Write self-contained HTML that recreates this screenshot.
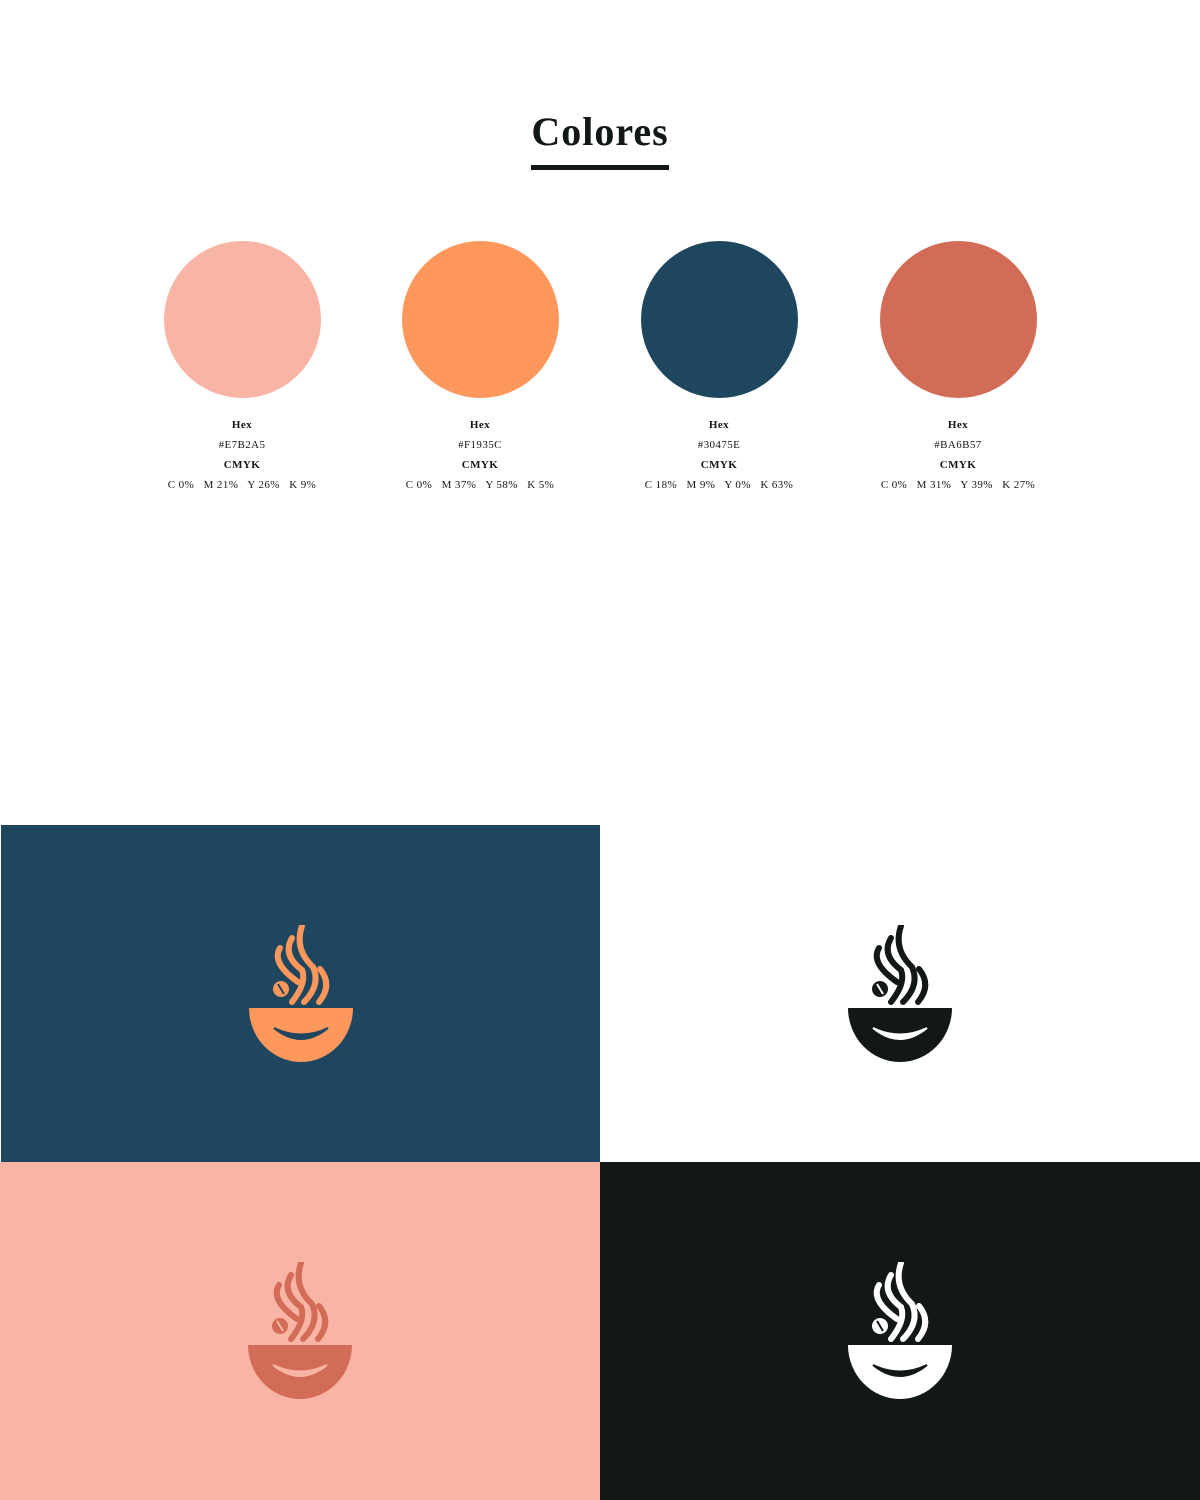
<!DOCTYPE html>
<html><head><meta charset="utf-8"><style>
body{margin:0;width:1200px;height:1500px;background:#fff;position:relative;overflow:hidden;font-family:"Liberation Serif",serif;color:#121718}
h1{position:absolute;top:107px;left:0;width:1200px;text-align:center;margin:0;font-size:40px;font-weight:bold;line-height:50px;letter-spacing:1px}
.ul{position:absolute;left:531px;top:165px;width:138px;height:5px;background:#121718}
.sw{position:absolute;top:241px;width:240px;text-align:center}
.c{width:157px;height:157px;border-radius:50%;margin:0 auto 17px}
.sw p{margin:0;font-size:11px;line-height:20px;letter-spacing:0.4px}
.b{font-weight:bold}
.p{position:absolute}
svg.l{position:absolute;width:104px;height:138px}
</style></head><body>
<svg width="0" height="0" style="position:absolute"><defs>
<g id="logo">
<path d="M0,83 H104 A52,54 0 0 1 0,83 Z" fill="var(--f)"/>
<path d="M25,103 Q52,125 79,103 Q52,116 25,103 Z" fill="var(--k)" stroke="var(--k)" stroke-width="2"/>
<circle cx="32" cy="64" r="8" fill="var(--f)"/>
<path d="M29,59 L35,69" stroke="var(--k)" stroke-width="2"/>
<g fill="none" stroke="var(--f)" stroke-linecap="round" stroke-width="6">
<path d="M31,23 Q22,38 49,57"/>
<path d="M43,13 Q33,30 53,45 Q58,58 43,77"/>
<path d="M53,1 Q45,24 64,42 Q72,60 55,77"/>
<path d="M71,44 Q84,60 70,77"/>
</g>
</g></defs></svg>
<h1>Colores</h1><div class="ul"></div>
<div class="sw" style="left:122px"><div class="c" style="background:#f8b5a6"></div><p class="b">Hex</p><p>#E7B2A5</p><p class="b">CMYK</p><p>C 0% &nbsp; M 21% &nbsp; Y 26% &nbsp; K 9%</p></div>
<div class="sw" style="left:360px"><div class="c" style="background:#fe975c"></div><p class="b">Hex</p><p>#F1935C</p><p class="b">CMYK</p><p>C 0% &nbsp; M 37% &nbsp; Y 58% &nbsp; K 5%</p></div>
<div class="sw" style="left:599px"><div class="c" style="background:#1e465e"></div><p class="b">Hex</p><p>#30475E</p><p class="b">CMYK</p><p>C 18% &nbsp; M 9% &nbsp; Y 0% &nbsp; K 63%</p></div>
<div class="sw" style="left:838px"><div class="c" style="background:#d26c57"></div><p class="b">Hex</p><p>#BA6B57</p><p class="b">CMYK</p><p>C 0% &nbsp; M 31% &nbsp; Y 39% &nbsp; K 27%</p></div>
<div class="p" style="left:1px;top:825px;width:599px;height:337px;background:#1e465e"></div>
<div class="p" style="left:0;top:1162px;width:600px;height:338px;background:#f8b5a6"></div>
<div class="p" style="left:600px;top:1162px;width:600px;height:338px;background:#121718"></div>
<svg class="l" style="left:249px;top:925px;--f:#fe975c;--k:#1e465e" viewBox="0 0 104 138"><use href="#logo"/></svg>
<svg class="l" style="left:848px;top:925px;--f:#121718;--k:#fff" viewBox="0 0 104 138"><use href="#logo"/></svg>
<svg class="l" style="left:248px;top:1262px;--f:#d26c57;--k:#f8b5a6" viewBox="0 0 104 138"><use href="#logo"/></svg>
<svg class="l" style="left:848px;top:1262px;--f:#fff;--k:#121718" viewBox="0 0 104 138"><use href="#logo"/></svg>
</body></html>
